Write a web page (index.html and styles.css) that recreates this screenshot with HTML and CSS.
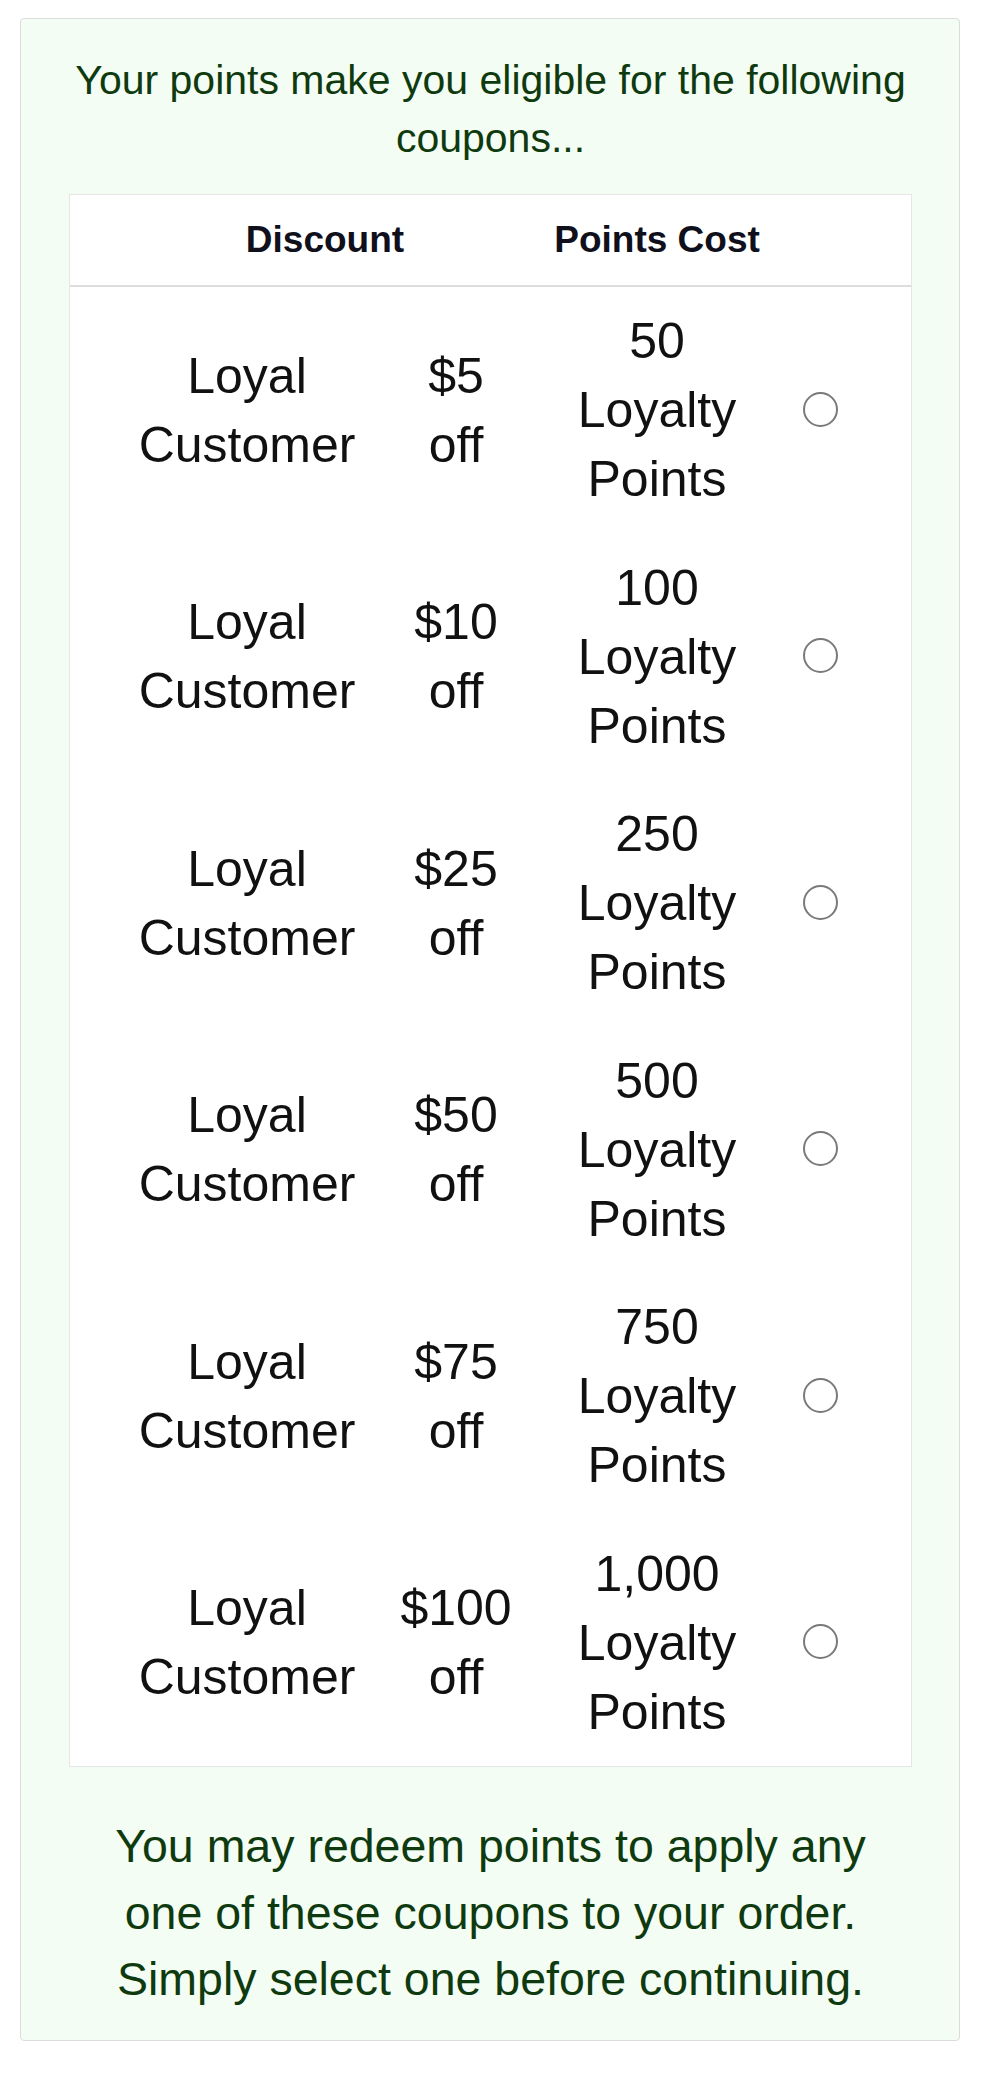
FILE: index.html
```html
<!DOCTYPE html>
<html lang="en">
<head>
    <meta charset="UTF-8">
    <meta name="viewport" content="width=device-width, initial-scale=1.0">
    <title>Redeem Loyalty Points</title>
    <link rel="stylesheet" href="styles.css">
</head>
<body>
    <div class="coupon-box">
        <p class="intro">Your points make you eligible for the following coupons...</p>

        <div class="coupon-list">
            <table class="coupon-table">
                <colgroup>
                    <col class="col-name">
                    <col class="col-amount">
                    <col class="col-cost">
                    <col class="col-pick">
                </colgroup>
                <thead>
                    <tr>
                        <th colspan="2" class="th-discount">Discount</th>
                        <th class="th-cost">Points Cost</th>
                        <th></th>
                    </tr>
                </thead>
                <tbody>
                    <tr>
                        <td class="name">Loyal Customer</td>
                        <td class="amount">$5 off</td>
                        <td class="cost">50 Loyalty Points</td>
                        <td class="pick"><input type="radio" name="coupon" value="5"></td>
                    </tr>
                    <tr>
                        <td class="name">Loyal Customer</td>
                        <td class="amount">$10 off</td>
                        <td class="cost">100 Loyalty Points</td>
                        <td class="pick"><input type="radio" name="coupon" value="10"></td>
                    </tr>
                    <tr>
                        <td class="name">Loyal Customer</td>
                        <td class="amount">$25 off</td>
                        <td class="cost">250 Loyalty Points</td>
                        <td class="pick"><input type="radio" name="coupon" value="25"></td>
                    </tr>
                    <tr>
                        <td class="name">Loyal Customer</td>
                        <td class="amount">$50 off</td>
                        <td class="cost">500 Loyalty Points</td>
                        <td class="pick"><input type="radio" name="coupon" value="50"></td>
                    </tr>
                    <tr>
                        <td class="name">Loyal Customer</td>
                        <td class="amount">$75 off</td>
                        <td class="cost">750 Loyalty Points</td>
                        <td class="pick"><input type="radio" name="coupon" value="75"></td>
                    </tr>
                    <tr>
                        <td class="name">Loyal Customer</td>
                        <td class="amount">$100 off</td>
                        <td class="cost">1,000 Loyalty Points</td>
                        <td class="pick"><input type="radio" name="coupon" value="100"></td>
                    </tr>
                </tbody>
            </table>
        </div>

        <p class="outro">You may redeem points to apply any one of these coupons to your order. Simply select one before continuing.</p>
    </div>
</body>
</html>
```

FILE: styles.css
```css
* {
    margin: 0;
    padding: 0;
    box-sizing: border-box;
}

body {
    font-family: "Liberation Sans", Arial, Helvetica, sans-serif;
    background-color: #fff;
    color: #111;
}

.coupon-box {
    width: 940px;
    margin: 18px 0 0 20px;
    padding: 32px 47px 27px 48px;
    background-color: #f3fdf3;
    border: 1px solid #dcdcdc;
    border-radius: 4px;
}

.intro {
    font-size: 41px;
    line-height: 58px;
    text-align: center;
    color: #0f3a0f;
    margin-bottom: 27px;
}

.coupon-list {
    background: #fff;
    border: 1px solid #e6e6e6;
}

.coupon-table {
    width: 100%;
    table-layout: fixed;
    border-collapse: collapse;
}

.col-name { width: 304px; }
.col-amount { width: 164px; }
.col-cost { width: 238px; }
.col-pick { width: 135px; }

.coupon-table th {
    font-size: 37px;
    font-weight: 700;
    line-height: 52px;
    padding: 19px 0;
    text-align: center;
    color: #10101c;
    border-bottom: 2px solid #dddddd;
}

.th-discount {
    padding-left: 42px !important;
}

.th-cost {
    padding: 19px 10px !important;
}

.coupon-table td {
    font-size: 50px;
    line-height: 69px;
    padding: 20px 0 19.5px;
    text-align: center;
    vertical-align: middle;
    color: #111;
}

.coupon-table td.name {
    padding-left: 50px;
}

.coupon-table td.amount {
    padding-left: 24px;
    padding-right: 24px;
}

.coupon-table td.cost {
    padding-left: 10px;
    padding-right: 10px;
}

.coupon-table td.pick {
    padding-right: 47px;
}

.pick input[type="radio"] {
    -webkit-appearance: none;
    appearance: none;
    display: block;
    margin: -3px auto 0;
    width: 35px;
    height: 35px;
    border: 2.5px solid #7a7a7a;
    border-radius: 50%;
    background: #fff;
    cursor: pointer;
}

.pick input[type="radio"]:checked {
    border: 10px solid #1a73e8;
}

.outro {
    font-size: 46.5px;
    line-height: 66.5px;
    text-align: center;
    color: #0f3a0f;
    margin-top: 46px;
    padding: 0 30px;
}
```
